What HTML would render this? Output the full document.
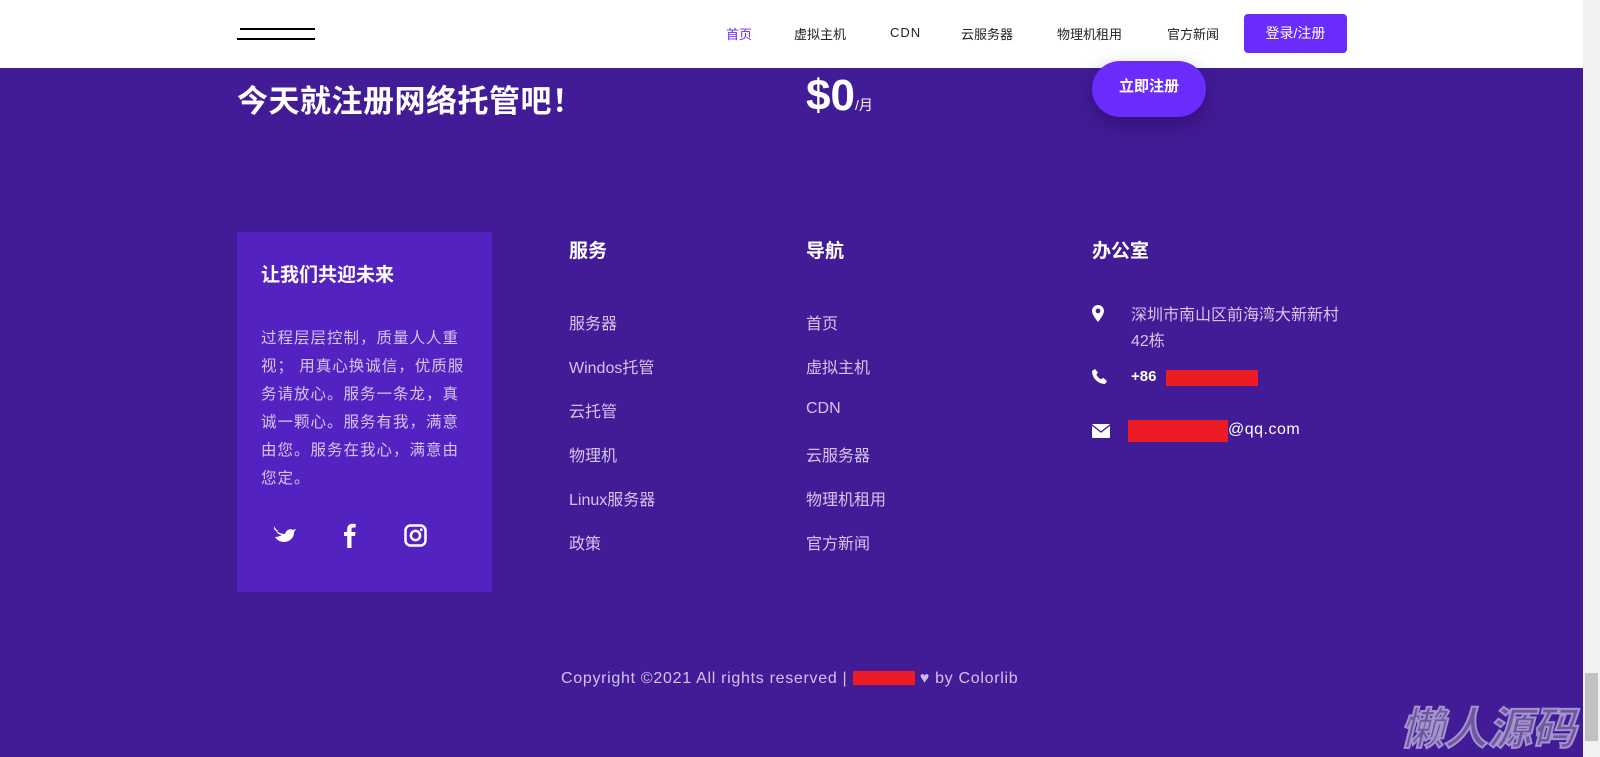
<!DOCTYPE html>
<html><head><meta charset="utf-8"><style>
*{margin:0;padding:0;box-sizing:border-box}
body{width:1600px;height:757px;overflow:hidden;background:#421b96;font-family:"Liberation Sans","Noto Sans CJK SC",sans-serif;position:relative;color:#fff}
.a{position:absolute;white-space:nowrap}
header{position:absolute;left:0;top:0;width:1583px;height:68px;background:#fff}
.nav{font-size:13px;color:#222;top:24px}
.sb{position:absolute;left:1583px;top:0;width:17px;height:757px;background:#f1f1f1}
.sb div{position:absolute;left:2px;top:673px;width:13px;height:68px;background:#c1c1c1}
.lnk{font-size:16px;color:#d4c6ee}
.h{font-size:19px;font-weight:bold}
</style></head><body>
<header>
<div class="a" style="left:240px;top:28px;width:75px;height:3px;border-top:2px solid #000"></div>
<div class="a" style="left:237px;top:38px;width:78px;height:3px;border-top:2px solid #000"></div>
<div class="a nav" style="left:726px;color:#6a2bfb">首页</div>
<div class="a nav" style="left:794px">虚拟主机</div>
<div class="a nav" style="left:890px;letter-spacing:1px;top:25px">CDN</div>
<div class="a nav" style="left:961px">云服务器</div>
<div class="a nav" style="left:1057px">物理机租用</div>
<div class="a nav" style="left:1167px">官方新闻</div>
<div class="a" style="left:1244px;top:14px;width:103px;height:39px;background:#6a2bfb;border-radius:4px;color:#fff;font-size:14px;text-align:center;line-height:39px">登录/注册</div>
</header>
<div class="a" style="left:237px;top:76px;font-size:31px;font-weight:bold;letter-spacing:0.5px">今天就注册网络托管吧！</div>
<div class="a" style="left:806px;top:71px;font-size:44px;font-weight:bold">$0<span style="font-size:14px;font-weight:normal">/月</span></div>
<div class="a" style="left:1092px;top:61px;width:114px;height:56px;background:#6a2bfb;border-radius:28px;text-align:center;line-height:52px;font-size:15px;font-weight:bold;box-shadow:0 8px 18px rgba(30,0,80,.4)">立即注册</div>
<div class="a" style="left:237px;top:232px;width:255px;height:360px;background:#5322c0"></div>
<div class="a h" style="left:261px;top:260px">让我们共迎未来</div>
<div class="a lnk" style="left:261px;top:325px;white-space:normal;width:212px;line-height:28px;font-size:15.5px;letter-spacing:1px">过程层层控制，质量人人重视； 用真心换诚信，优质服务请放心。服务一条龙，真诚一颗心。服务有我，满意由您。服务在我心，满意由您定。</div>
<svg class="a" style="left:274px;top:526px" width="24" height="16" viewBox="0 0 24 16"><path d="M0 3c3 3 7 5 11 5 1-4 5-6 8-4l3-1-2 3v1c0 4-4 9-10 9-4 0-7-2-9-5 3 0 5-1 7-2-3 0-5-2-6-4h3c-3-1-4-3-5-5z" fill="#fff"/></svg>
<svg class="a" style="left:343px;top:522px" width="13" height="26" viewBox="0 0 13 26"><path d="M8.5 26V14H12l.5-4H8.5V7.5c0-1.2.4-2 2-2h2.2V2c-.4 0-1.7-.2-3.2-.2-3.2 0-5.3 1.900-5.300 5.400V10H1v4h3.2v12z" fill="#fff"/></svg>
<svg class="a" style="left:404px;top:524px" width="23" height="23" viewBox="0 0 23 23"><rect x="1.5" y="1.5" width="20" height="20" rx="5" fill="none" stroke="#fff" stroke-width="2.5"/><circle cx="11.5" cy="11.5" r="4.6" fill="none" stroke="#fff" stroke-width="2.5"/><circle cx="17.3" cy="5.7" r="1.4" fill="#fff"/></svg>
<div class="a h" style="left:569px;top:236px">服务</div>
<div class="a h" style="left:806px;top:236px">导航</div>
<div class="a h" style="left:1092px;top:236px">办公室</div>
<div class="a lnk" style="left:569px;top:310px">服务器</div>
<div class="a lnk" style="left:569px;top:354px">Windos托管</div>
<div class="a lnk" style="left:569px;top:398px">云托管</div>
<div class="a lnk" style="left:569px;top:442px">物理机</div>
<div class="a lnk" style="left:569px;top:486px">Linux服务器</div>
<div class="a lnk" style="left:569px;top:530px">政策</div>
<div class="a lnk" style="left:806px;top:310px">首页</div>
<div class="a lnk" style="left:806px;top:354px">虚拟主机</div>
<div class="a lnk" style="left:806px;top:400px">CDN</div>
<div class="a lnk" style="left:806px;top:442px">云服务器</div>
<div class="a lnk" style="left:806px;top:486px">物理机租用</div>
<div class="a lnk" style="left:806px;top:530px">官方新闻</div>
<svg class="a" style="left:1092px;top:305px" width="12" height="17" viewBox="0 0 12 17"><path d="M6 0C2.700 0 0 2.600 0 5.900 0 10 6 17 6 17s6-7 6-11.100C12 2.600 9.300 0 6 0zm0 8.300a2.400 2.400 0 110-4.800 2.400 2.400 0 010 4.800z" fill="#fff"/></svg>
<div class="a lnk" style="left:1131px;top:303px;line-height:26px">深圳市南山区前海湾大新新村<br>42栋</div>
<svg class="a" style="left:1092px;top:369px" width="15" height="15" viewBox="0 0 15 15"><path d="M3 0l3 3.500-1.600 2c.8 2 2.700 4 4.700 4.800l2-1.600L15 12l-2 3C6 15 0 9 0 2z" fill="#fff"/></svg>
<div class="a" style="left:1131px;top:368px;font-size:15px;font-weight:bold">+86</div>
<div class="a" style="left:1166px;top:370px;width:92px;height:16px;background:#ed1c24"></div>
<svg class="a" style="left:1092px;top:424px" width="18" height="14" viewBox="0 0 18 14"><rect width="18" height="14" rx="1" fill="#fff"/><path d="M0 1l9 7 9-7" fill="none" stroke="#421b96" stroke-width="1.3"/></svg>
<div class="a" style="left:1128px;top:420px;width:100px;height:22px;background:#ed1c24"></div>
<div class="a" style="left:1228px;top:421px;font-size:16px;letter-spacing:0.5px">@qq.com</div>
<div class="a" style="left:561px;top:670px;font-size:16px;letter-spacing:0.7px;color:#d0c4ee">Copyright ©2021 All rights reserved | <span style="display:inline-block;width:62px;height:14px;background:#ed1c24;vertical-align:-2px"></span> <span style="color:#cbb9f0">♥</span> by Colorlib</div>
<div class="a" style="left:1400px;top:693px;font-size:44px;font-weight:bold;font-style:italic;color:#6e5a9a;-webkit-text-stroke:2px #a592d0">懒人源码</div>
<div class="sb"><div></div></div>
</body></html>
